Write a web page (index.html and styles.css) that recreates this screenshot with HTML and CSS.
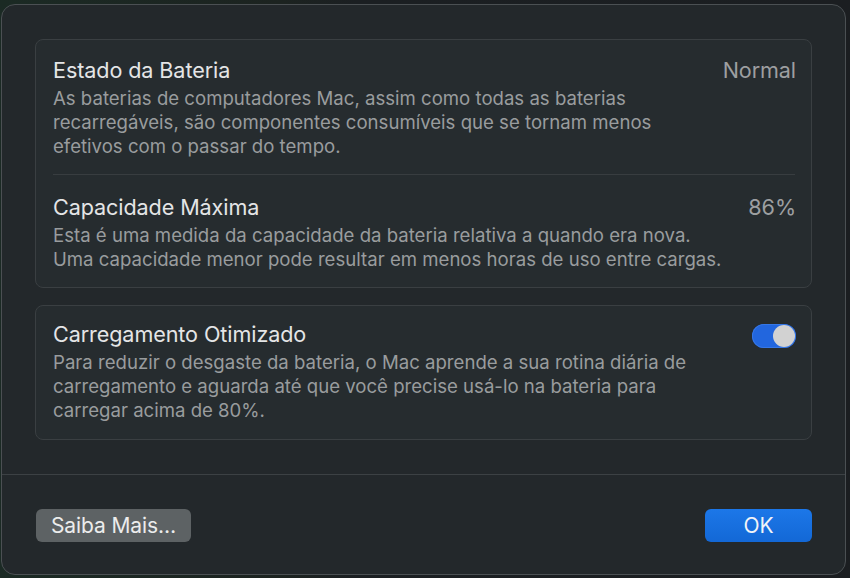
FILE: index.html
```html
<!DOCTYPE html>
<html lang="pt-BR">
<head>
<meta charset="utf-8">
<link rel="stylesheet" href="styles.css">
</head>
<body>
<div class="window">
  <div class="content">
    <section class="card">
      <div class="row">
        <div class="row-head">
          <span class="title">Estado da Bateria</span>
          <span class="value">Normal</span>
        </div>
        <p class="desc">As baterias de computadores Mac, assim como todas as baterias<br>recarregáveis, são componentes consumíveis que se tornam menos<br>efetivos com o passar do tempo.</p>
      </div>
      <div class="row row-sep">
        <div class="row-head">
          <span class="title">Capacidade Máxima</span>
          <span class="value">86%</span>
        </div>
        <p class="desc">Esta é uma medida da capacidade da bateria relativa a quando era nova.<br>Uma capacidade menor pode resultar em menos horas de uso entre cargas.</p>
      </div>
    </section>
    <section class="card">
      <div class="row row-single">
        <div class="row-head">
          <span class="title">Carregamento Otimizado</span>
          <span class="toggle"><span class="knob"></span></span>
        </div>
        <p class="desc">Para reduzir o desgaste da bateria, o Mac aprende a sua rotina diária de<br>carregamento e aguarda até que você precise usá-lo na bateria para<br>carregar acima de 80%.</p>
      </div>
    </section>
  </div>
  <div class="footer">
    <button class="btn btn-secondary">Saiba Mais…</button>
    <button class="btn btn-primary">OK</button>
  </div>
</div>
</body>
</html>
```
FILE: styles.css
```css
html, body {
  margin: 0;
  padding: 0;
}
body {
  width: 850px;
  height: 578px;
  background: linear-gradient(90deg, #1b2a24 0%, #1c2320 33%, #1b1f22 42%, #1b1e21 100%);
  font-family: Inter, "Open Sans", "Liberation Sans", sans-serif;
  overflow: hidden;
}
.window {
  box-sizing: border-box;
  width: 845px;
  height: 571px;
  margin: 4px 0 0 1px;
  background: #23282b;
  border: 1px solid #4b5053;
  border-radius: 14px;
  display: flex;
  flex-direction: column;
}
.content {
  padding: 34px 33px 34px 33px;
  display: flex;
  flex-direction: column;
  gap: 17px;
  border-bottom: 1px solid #3c4144;
}
.card {
  background: #262c2f;
  border: 1px solid #3a3f42;
  border-radius: 8px;
}
.row {
  padding: 18px 15px 16px 17px;
}
.row-sep {
  position: relative;
  padding-top: 21px;
}
.row-single {
  padding-top: 16px;
  padding-bottom: 17px;
}
.row-sep::before {
  content: "";
  position: absolute;
  left: 17px;
  right: 16px;
  top: 0;
  height: 1px;
  background: #383d40;
}
.row-head {
  display: flex;
  justify-content: space-between;
  align-items: center;
  height: 24px;
}
.title {
  color: #e4e5e6;
  font-size: 21.6px;
  line-height: 24px;
  letter-spacing: -0.1px;
}
.value {
  color: #9d9fa1;
  font-size: 21.6px;
  line-height: 24px;
  letter-spacing: -0.1px;
}
.desc {
  margin: 4px 0 0 0;
  color: #999c9e;
  font-size: 18.6px;
  line-height: 24px;
  white-space: nowrap;
}
.toggle {
  width: 44px;
  height: 24px;
  border-radius: 12px;
  background: #2266de;
  position: relative;
  margin-top: 3px;
  box-shadow: inset 0 0 0 1px #3677e6;
}
.knob {
  position: absolute;
  right: 1px;
  top: 1px;
  width: 22px;
  height: 22px;
  border-radius: 50%;
  background: #d2d2d2;
}
.footer {
  display: flex;
  justify-content: space-between;
  align-items: flex-start;
  padding: 34px 33px 0 34px;
}
.btn {
  height: 33px;
  border: none;
  border-radius: 6px;
  font-family: inherit;
  font-size: 21px;
  color: #ececec;
  padding: 0;
  letter-spacing: -0.1px;
}
.btn-secondary {
  width: 155px;
  background: #5d6264;
}
.btn-primary {
  width: 107px;
  background: linear-gradient(#1c77e8, #1368d6);
  color: #f2f4f8;
}
```
